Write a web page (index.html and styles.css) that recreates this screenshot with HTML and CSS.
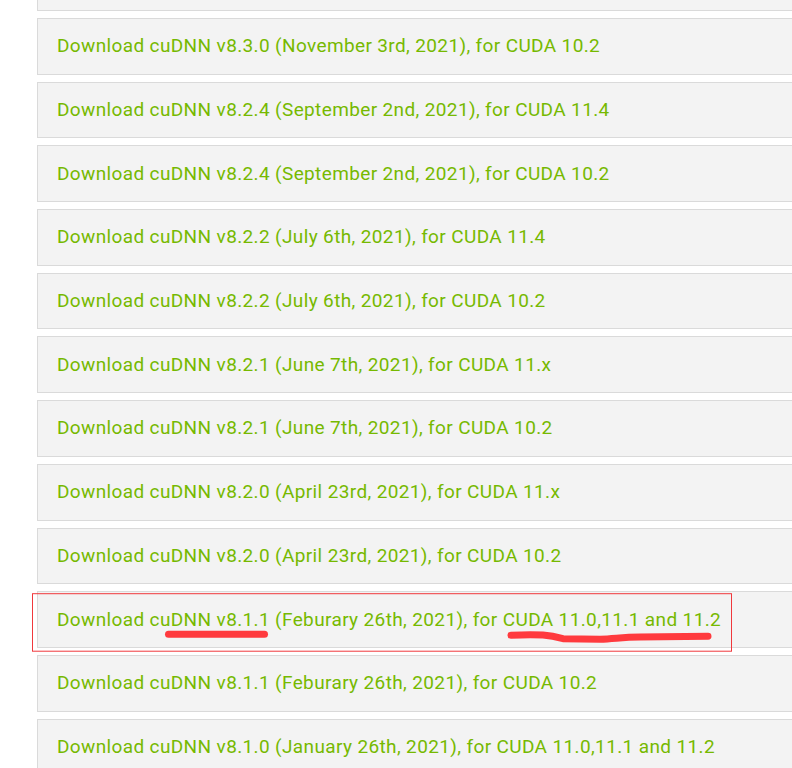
FILE: index.html
```html
<!DOCTYPE html>
<html>
<head>
<meta charset="utf-8">
<link rel="stylesheet" href="styles.css">
</head>
<body>
<div class="list">
  <div class="item"></div>
  <div class="item"><a class="link">Download cuDNN v8.3.0 (November 3rd, 2021), for CUDA 10.2</a></div>
  <div class="item"><a class="link">Download cuDNN v8.2.4 (September 2nd, 2021), for CUDA 11.4</a></div>
  <div class="item"><a class="link">Download cuDNN v8.2.4 (September 2nd, 2021), for CUDA 10.2</a></div>
  <div class="item"><a class="link">Download cuDNN v8.2.2 (July 6th, 2021), for CUDA 11.4</a></div>
  <div class="item"><a class="link">Download cuDNN v8.2.2 (July 6th, 2021), for CUDA 10.2</a></div>
  <div class="item"><a class="link">Download cuDNN v8.2.1 (June 7th, 2021), for CUDA 11.x</a></div>
  <div class="item"><a class="link">Download cuDNN v8.2.1 (June 7th, 2021), for CUDA 10.2</a></div>
  <div class="item"><a class="link">Download cuDNN v8.2.0 (April 23rd, 2021), for CUDA 11.x</a></div>
  <div class="item"><a class="link">Download cuDNN v8.2.0 (April 23rd, 2021), for CUDA 10.2</a></div>
  <div class="item highlighted">
    <a class="link">Download cuDNN v8.1.1 (Feburary 26th, 2021), for CUDA 11.0,11.1 and 11.2</a>
    <svg class="marks" width="710" height="64" viewBox="0 0 710 64">
      <rect x="0.5" y="2.7" width="699" height="57.5" fill="none" stroke="#f0383c" stroke-width="1"/>
      <path d="M136.5,43.2 L232.5,43.2" fill="none" stroke="#ff3a3e" stroke-width="7" stroke-linecap="round"/>
      <path d="M479,44.2 C508,42.7 518,44.2 531,47.7 L568,48.2 C583,47.7 590,46.2 608,46 L676,45.2" fill="none" stroke="#ff3a3e" stroke-width="7" stroke-linecap="round" stroke-linejoin="round"/>
    </svg>
  </div>
  <div class="item"><a class="link">Download cuDNN v8.1.1 (Feburary 26th, 2021), for CUDA 10.2</a></div>
  <div class="item"><a class="link">Download cuDNN v8.1.0 (January 26th, 2021), for CUDA 11.0,11.1 and 11.2</a></div>
</div>
</body>
</html>
```

FILE: styles.css
```css
html, body {
  margin: 0;
  padding: 0;
  background: #ffffff;
  overflow: hidden;
}

.list {
  margin-top: -45.7px;
  padding-left: 37px;
  display: flex;
  flex-direction: column;
  gap: 7px;
}

.item {
  position: relative;
  box-sizing: border-box;
  width: 800px;
  height: 56.7px;
  flex: none;
  background: #f3f3f3;
  border: 1px solid #dadada;
  display: flex;
  align-items: center;
  padding-left: 19px;
}

.link {
  font-family: Roboto, "Liberation Sans", sans-serif;
  font-size: 19px;
  letter-spacing: 0.37px;
  color: #76b900;
  text-decoration: none;
  white-space: nowrap;
  line-height: 1;
  padding-bottom: 1px;
}

.marks {
  position: absolute;
  left: -6px;
  top: -1px;
  pointer-events: none;
}
```
